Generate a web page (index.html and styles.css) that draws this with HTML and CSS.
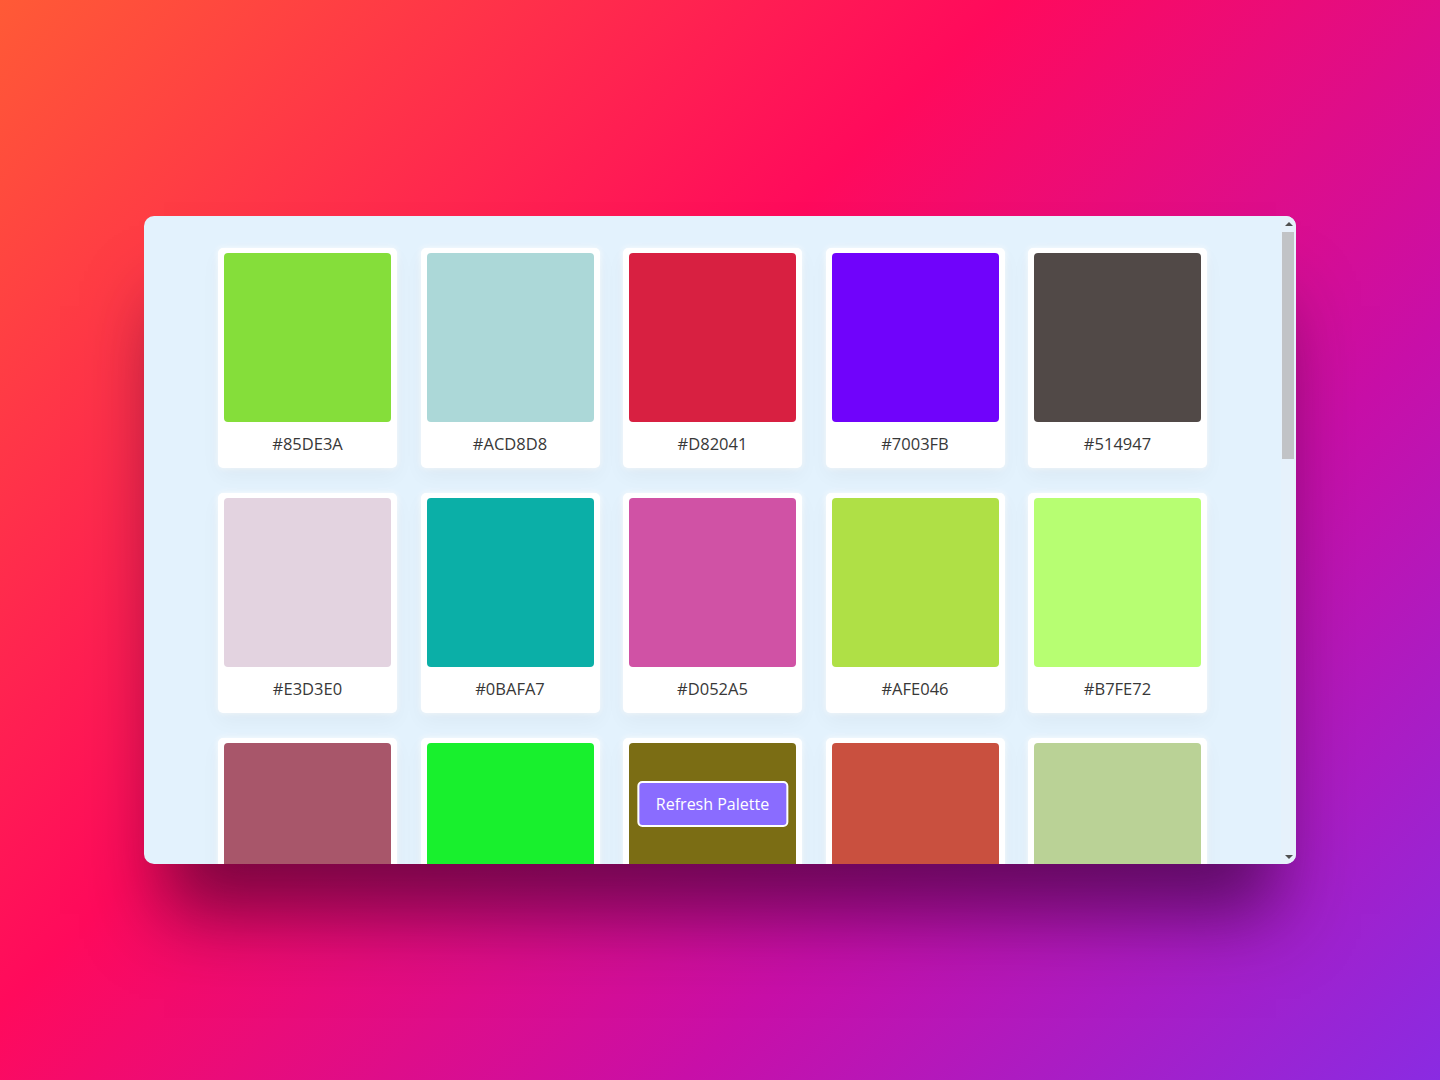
FILE: index.html
```html
<!DOCTYPE html>
<html lang="en">
<head>
  <meta charset="UTF-8">
  <title>Color Palette Generator</title>
  <link rel="stylesheet" href="styles.css">
</head>

<body>
  <div class="window">
    <div class="scroller">
      <ul class="container" id="palette"></ul>
    </div>
    <div class="scrollbar">
      <span class="arrow arrow-up"></span>
      <div class="track">
        <div class="thumb"></div>
      </div>
      <span class="arrow arrow-down"></span>
    </div>
    <button class="refresh-btn">Refresh Palette</button>
  </div>

  <script>
    const palette = document.getElementById('palette');

    const colores = [
      '#85DE3A', '#ACD8D8', '#D82041', '#7003FB', '#514947',
      '#E3D3E0', '#0BAFA7', '#D052A5', '#AFE046', '#B7FE72',
      '#A8566A', '#18F02D', '#7B6D14', '#C9503F', '#BAD296',
      '#3E7AC4', '#F2A93B', '#6C2F8E', '#27C08A', '#E86F9B',
      '#5D8F2A', '#1F3B5C', '#FFD24C', '#9A4E2B', '#4FC3E8',
      '#C2185B', '#7ED6A0', '#2E2A63', '#F08060', '#8E9C3A',
      '#D9B8F0', '#00796B', '#FF5E3A', '#445566', '#B0E24C'
    ];

    // Pintar la paleta
    colores.forEach(hex => {
      const item = `
        <li class="color">
          <div class="rect-box" style="background: ${hex}"></div>
          <span class="hex-value">${hex}</span>
        </li>
      `;
      palette.innerHTML += item;
    });
  </script>
</body>
</html>
```

FILE: styles.css
```css
* {
  box-sizing: border-box;
}

body {
  margin: 0;
  height: 100vh;
  display: flex;
  align-items: center;
  justify-content: center;
  font-family: "Open Sans", "Liberation Sans", sans-serif;
  background: linear-gradient(135deg, #ff5a36 0%, #ff0a5c 40%, #c80fa8 70%, #8a2be2 100%);
}

.window {
  position: relative;
  display: flex;
  width: 1152px;
  height: 648px;
  background-color: #e3f2fd;
  border-radius: 10px;
  overflow: hidden;
  box-shadow: 0 70px 70px -20px rgba(40, 0, 40, 0.6);
}

.scroller {
  flex: 1;
  height: 100%;
  overflow-y: auto;
  scrollbar-width: none;
}

.container {
  list-style: none;
  margin: 0;
  padding: 32px 0 50px;
  display: grid;
  grid-template-columns: repeat(5, 179px);
  column-gap: 23.5px;
  row-gap: 25px;
  justify-content: center;
}

.color {
  background-color: white;
  padding: 5px 6px;
  border-radius: 5px;
  box-shadow: 0 8px 20px rgba(0, 0, 0, 0.04), 0 0 6px rgba(255, 255, 255, 0.9);
  cursor: pointer;
}

.rect-box {
  height: 169px;
  border-radius: 4px;
}

.hex-value {
  display: block;
  text-align: center;
  font-size: 16.5px;
  line-height: 22px;
  padding: 11px 0 8px;
  color: #383838;
}

/* barra de scroll dibujada */
.scrollbar {
  width: 15px;
  display: flex;
  flex-direction: column;
  align-items: center;
  background-color: #e6f1fb;
}

.arrow {
  width: 15px;
  height: 15px;
  display: flex;
  align-items: center;
  justify-content: center;
}

.arrow::before {
  content: "";
  border-left: 4px solid transparent;
  border-right: 4px solid transparent;
}

.arrow-up::before {
  border-bottom: 4px solid #505050;
}

.arrow-down::before {
  border-top: 4px solid #505050;
}

.track {
  flex: 1;
  width: 100%;
  padding: 1px 2px 0 1px;
}

.thumb {
  height: 227px;
  background-color: #c1c3c6;
}

.refresh-btn {
  position: absolute;
  bottom: 37px;
  left: calc(50% - 7.5px);
  transform: translateX(-50%);
  padding: 12px 17px;
  font-family: inherit;
  font-size: 16px;
  line-height: 18px;
  font-weight: 500;
  color: white;
  background-color: #8a6cff;
  border: 2px solid white;
  border-radius: 5px;
  cursor: pointer;
}
```
